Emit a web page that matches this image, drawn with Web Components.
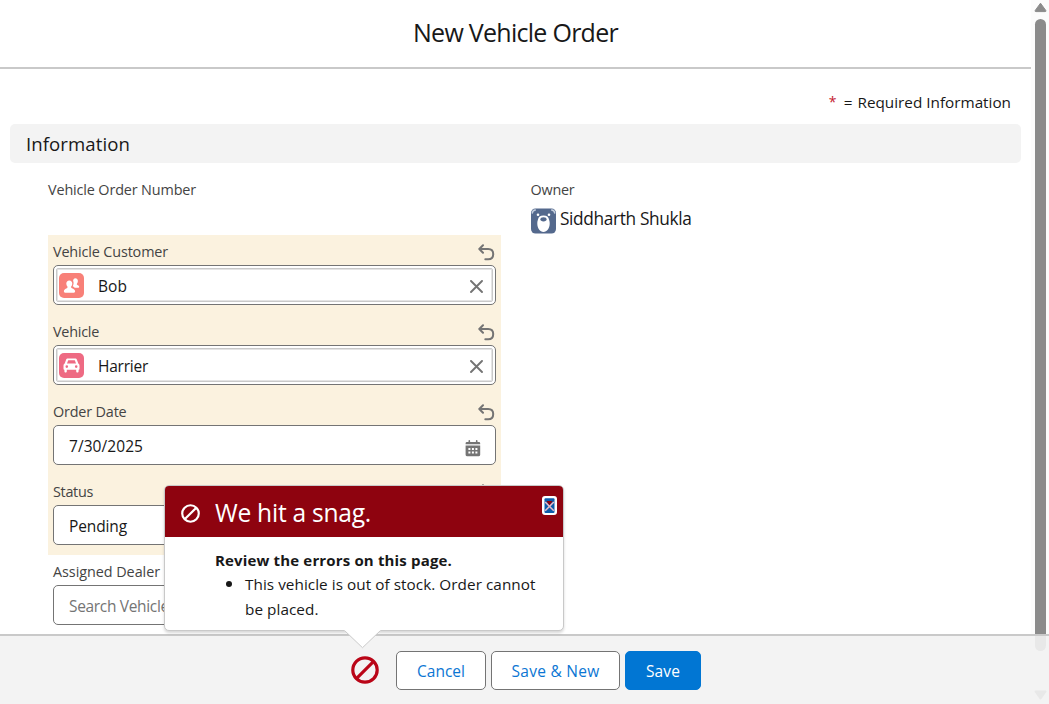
<!DOCTYPE html>
<html lang="en">
<head>
<meta charset="utf-8">
<title>New Vehicle Order</title>
<style>
  html, body { margin: 0; height: 100%; overflow: hidden; background: #fff; }
  body { font: 15.500px/20px "Open Sans", "Noto Sans", sans-serif; color: #181818; }
</style>
</head>
<body>
<order-page></order-page>
<script>
const define = (name, html, setup) => {
  const template = document.createElement('template');
  template.innerHTML = html.trim();
  customElements.define(name, class extends HTMLElement {
    connectedCallback() {
      if (this.shadowRoot) return;
      this.attachShadow({ mode: 'open' }).append(template.content.cloneNode(true));
      if (setup) setup(this, this.shadowRoot);
    }
  });
};

/* One line of text, tracked so that it fills the width in its "w" attribute. */
define('text-run', `
<style>:host { display: inline-block; white-space: nowrap; vertical-align: top; }</style><slot></slot>`,
(el) => {
  const target = parseFloat(el.getAttribute('w'));
  if (!target) return;
  const natural = el.getBoundingClientRect().width;
  el.style.letterSpacing = ((target - natural) / el.textContent.length) + 'px';
});

define('page-header', `
<style>
  :host { display: flex; justify-content: center; box-sizing: border-box; height: 69px; padding-top: 12px;
    border-bottom: 2px solid #c9c9c9; font-size: 25px; line-height: 40px; }
</style><slot></slot>`);

define('required-note', `
<style>
  :host { display: flex; justify-content: flex-end; gap: 5px; padding: 23px 10px 0 0; height: 32px; font-size: 15.300px; line-height: 20px; }
  b { font-weight: 400; color: #c4202e; width: 10px; font-size: 14px; }
</style><b>*</b><slot></slot>`);

define('section-title', `
<style>
  :host { display: block; height: 39px; box-sizing: border-box; padding: 1px 16px 0; border-radius: 5px;
    background: #f3f3f3; font-size: 18.6px; line-height: 38px; }
</style><slot></slot>`);

define('undo-icon', `
<style>:host { display: block; width: 17px; height: 17px; } svg { display: block; }</style>
<svg width="17" height="17" viewBox="0 0 17 17" fill="none" stroke="#747474" stroke-width="2" stroke-linecap="round" stroke-linejoin="round">
  <path d="M5 1.2 1.3 5 5 8.8M1.6 5h8.6c3.2 0 5 2.1 5 5 0 3.200-2 5.300-5 5.300H7.300"/></svg>`);

define('form-field', `
<style>
  :host { display: block; height: 80px; box-sizing: border-box; padding: 7px 5px 0; }
  .label { display: flex; justify-content: space-between; height: 23px; font-size: 14.4px; line-height: 20px; color: #444; }
  .label undo-icon { margin: 1.500px 1.500px 0 0; }
  .box { display: flex; align-items: center; box-sizing: border-box; height: 40px; border: 1px solid #747474;
    border-radius: 5px; background: #fff; padding: 0 15px; }
  .box ::slotted(text-run) { flex: none; margin-top: 2px; }
  :host([lookup]) .box { padding: 2px; }
</style>
<div class="label"><slot name="label"></slot><undo-icon></undo-icon></div>
<div class="box"><slot></slot></div>`,
(el, root) => { if (el.hasAttribute('plain')) root.querySelector('undo-icon').remove(); });

define('lookup-pill', `
<style>
  :host { display: flex; flex: 1; align-items: center; box-sizing: border-box; height: 34px;
    border: 1px solid #c9c9c9; box-shadow: inset 0 0 0 1px #e4e4e4; border-radius: 2px; padding: 0 9px 0 2px; }
  .text { flex: 1; padding: 2px 0 0 14px; line-height: 24px; }
  .x { margin-top: 2px; }
</style>
<slot name="icon"></slot><div class="text"><slot></slot></div>
<svg class="x" width="13" height="13" viewBox="0 0 13 13" stroke="#747474" stroke-width="1.900" stroke-linecap="round"><path d="M1 1l11 11M12 1 1 12"/></svg>`);

define('people-icon', `
<style>:host { display: block; width: 25px; height: 25px; }</style>
<svg width="25" height="25" viewBox="0 0 25 25" style="display:block"><rect width="25" height="25" rx="5" fill="#f88078"/>
<g fill="#fff"><path d="M16.200 5.200c1.700 0 2.700 1.200 2.700 2.900 0 1.100-.4 2-1 2.700-.3.600 0 1 .6 1.300 1.100.5 1.700 1 1.700 2 0 .4-.3.600-.7.600h-3.800c-.8-.8-1.400-1.100-2-1.500 1-1.500 1.200-3.800.4-5.500.2-1.600.9-2.500 2.100-2.500z"/>
<path d="M10.300 7.400c1.900 0 3 1.400 3 3.200 0 1.200-.4 2.200-1.100 3-.4.7 0 1.300.7 1.600 1.700.7 3.200 1.500 3.200 3.100 0 .9-.4 1.400-1.200 1.400H6.100c-.8 0-1.200-.5-1.200-1.400 0-1.600 1.300-2.400 2.900-3.100.7-.3 1-.9.600-1.600-.7-.8-1.100-1.800-1.100-3 0-1.800 1.100-3.200 3-3.200z"/></g></svg>`);

define('car-icon', `
<style>:host { display: block; width: 25px; height: 25px; }</style>
<svg width="25" height="25" viewBox="0 0 25 25" style="display:block"><rect width="25" height="25" rx="5" fill="#ee6a83"/>
<path fill="#fff" fill-rule="evenodd" d="M9 5.500h7c1 0 1.700.5 2 1.400l1.300 3.700c.8.400 1.200 1.100 1.200 2v3.200c0 .6-.4 1-.9 1v1.400c0 .8-.5 1.300-1.200 1.300s-1.200-.5-1.200-1.300v-1.400H7.800v1.400c0 .8-.5 1.300-1.200 1.300s-1.200-.5-1.200-1.300v-1.400c-.5 0-.9-.4-.9-1v-3.200c0-.9.400-1.600 1.200-2L7 6.900c.3-.9 1-1.400 2-1.400zM9.200 7.200 8 10.400h9l-1.200-3.200zM7.800 12.300a1.300 1.300 0 1 0 0 2.600 1.300 1.300 0 0 0 0-2.600zm9.400 0a1.300 1.300 0 1 0 0 2.600 1.300 1.300 0 0 0 0-2.600z"/></svg>`);

define('calendar-icon', `
<style>:host { display: block; width: 16px; height: 17px; margin: 7px -1px 0 auto; }</style>
<svg width="16" height="17" viewBox="0 0 16 17" style="display:block" fill="#747474"><path d="M2 2h1.500V.8q0-.8.800-.8t.8.800V2h5.800V.8q0-.8.800-.8t.8.800V2H14q1.200 0 1.200 1.200V4.200H.6V3.200Q.6 2 2 2z"/>
<path fill-rule="evenodd" d="M.6 5.500h14.600v9.300q0 1.400-1.300 1.400H1.900Q.6 16.200.6 14.800zM3.400 7.900v2h2v-2zm3.500 0v2h2v-2zm3.500 0v2h2v-2zM3.400 11.400v2h2v-2zm3.500 0v2h2v-2zm3.500 0v2h2v-2z"/></svg>`);

define('owner-field', `
<style>
  :host { display: block; padding-left: 11px; }
  .label { font-size: 14.4px; line-height: 20px; color: #444; height: 27px; margin-left: -.5px; }
  .who { display: flex; gap: 4px; font-size: 17.300px; line-height: 24px; }
  svg { margin-top: .5px; }
</style>
<div class="label"><text-run w="44">Owner</text-run></div>
<div class="who"><svg width="25" height="26" viewBox="0 0 25 26"><rect y=".5" width="25" height="25" rx="4.500" fill="#54698d"/>
<g fill="none" stroke="#c5cfdf" stroke-width="1.500" stroke-linecap="round"><path d="M1.300 5Q1.700 2.300 4.300 2M23.700 5Q23.300 2.300 20.700 2"/></g>
<g fill="#fff"><circle cx="7" cy="6.700" r="1.300"/><circle cx="18" cy="6.700" r="1.300"/><path d="M12.500 7.500c3.400 0 5 1.400 5.500 4 .4 1.300.7 2.200.7 4.100 0 4.600-2.600 8.400-6.200 8.400s-6.200-3.800-6.200-8.400c0-1.900.3-2.800.7-4.100.5-2.600 2.100-4 5.500-4z"/></g>
<ellipse cx="12.500" cy="11.300" rx="3.100" ry="2.100" fill="#54698d"/></svg><text-run w="131.5">Siddharth Shukla</text-run></div>`);

define('scroll-bar', `
<style>
  :host { position: relative; display: block; background: #fcfcfc; }
  svg { position: absolute; left: 0; top: 0; }
</style>
<svg width="18" height="634"><path d="M9.500 3.200 14.800 10.500Q15.300 11.600 14 11.600H5Q3.700 11.600 4.200 10.500z" fill="#8b8b8b" stroke="#8b8b8b" stroke-linejoin="round"/>
<path d="M4 634V24.500a5.500 5.500 0 0 1 11 0V634z" fill="#8b8b8b"/></svg>`);

define('ban-icon', `
<style>:host { display: block; } svg { display: block; width: 100%; height: 100%; }</style>
<svg viewBox="0 0 28 28" fill="none" stroke="currentColor" stroke-width="3.200"><circle cx="14" cy="14" r="12.200"/><path d="M22.600 5.400 5.400 22.600"/></svg>`);

define('action-button', `
<style>
  :host { display: flex; align-items: center; justify-content: center; box-sizing: border-box; height: 39px;
    border: 1px solid #747474; border-radius: 5px; background: #fff; color: #0b76d3; font-size: 15.500px; padding-top: 1px; }
  :host([brand]) { background: #0176d3; border-color: #0176d3; color: #fff; }
</style><slot></slot>`);

define('error-popover', `
<style>
  :host { display: block; box-sizing: border-box; width: 400px; height: 146px; border: 1px solid #c9c9c9; border-radius: 5px;
    background: #fff; box-shadow: 0 2px 3px rgba(0,0,0,.16); }
  header { display: flex; height: 51px; background: #8e030f; color: #fff; border-radius: 4px 4px 0 0; font-size: 24.600px; line-height: 54px; }
  header ban-icon { width: 19px; height: 19px; margin: 18px 15.500px 0; flex: none; }
  .close { margin: 10px 6px 0 auto; }
  .body { padding: 11px 0 0 50px; line-height: 25px; font-size: 15.300px; }
  .strong { font-weight: 700; height: 24px; font-size: 15px; line-height: 24px; }
  ul { margin: 0; padding: 0 0 0 30px; list-style: none; }
  li { position: relative; }
  li::before { content: ""; position: absolute; left: -19px; top: 9px; width: 6px; height: 6px; border-radius: 50%; background: #181818; }
  .nub { position: absolute; left: 179px; top: 144px; }
</style>
<header><ban-icon></ban-icon><text-run w="156">We hit a snag.</text-run>
<svg class="close" width="15" height="19" viewBox="0 0 15 19"><rect width="15" height="19" rx="3" fill="#fff"/><rect x="2.500" y="2.300" width="10" height="14.700" rx="1" fill="#0b5cab"/>
<path d="M4.500 5h6L7.500 9.500z" fill="#8e030f"/><path d="m3.200 6 8.600 8.800m0-8.800-8.600 8.800" stroke="#e9bccb" stroke-width="1.500"/><path d="M5 5.200h5L7.500 8.600z" fill="#8e030f"/></svg></header>
<div class="body"><div class="strong"><text-run w="237">Review the errors on this page.</text-run></div>
<ul><li><text-run w="290.5">This vehicle is out of stock. Order cannot</text-run><br><text-run w="73.5">be placed.</text-run></li></ul></div>
<svg class="nub" width="38" height="19"><path d="M0 0 18.500 18 37 0z" fill="#fff"/><path d="M.5.500 18.500 17.700 36.500.5" fill="none" stroke="#c9c9c9"/></svg>`);

define('action-footer', `
<style>
  :host { position: relative; display: flex; gap: 5px; box-sizing: border-box; height: 70px; padding: 15px 0 0 351px;
    border-top: 2px solid #c9c9c9; background: #f3f3f3; }
  ban-icon { width: 28px; height: 28px; margin: 5px 12px 0 0; color: #ba0517; }
  error-popover { position: absolute; left: 164px; top: -151px; }
  .track { position: absolute; right: 0; top: 0; }
</style>
<svg class="track" width="18" height="68"><path d="M4 0v9.500a5.500 5.500 0 0 0 11 0V0z" fill="#e8e8e8"/><path d="M4.500 55.500h10L9.500 62.500z" fill="#e8e8e8" stroke="#e8e8e8" stroke-width="2" stroke-linejoin="round"/></svg>
<ban-icon></ban-icon>
<action-button style="width:90px"><text-run w="48">Cancel</text-run></action-button>
<action-button style="width:129px"><text-run w="88">Save &amp; New</text-run></action-button>
<action-button brand style="width:76px"><text-run w="34">Save</text-run></action-button>
<error-popover></error-popover>`);

define('order-page', `
<style>
  :host { display: grid; grid-template-rows: 634px 70px; height: 704px; }
  .view { display: grid; grid-template-columns: 1fr 18px; min-height: 0; overflow: hidden; }
  .content { padding: 0 10px; }
  .cols { display: grid; grid-template-columns: 453px 1fr; column-gap: 19px; padding: 17px 0 0 38px; }
  .number { height: 55px; font-size: 14.400px; line-height: 20px; color: #444; }
  .edited { background: #fbf2df; }
  .hint { color: #747474; }
</style>
<div class="view">
  <div><page-header><text-run w="205">New Vehicle Order</text-run></page-header>
    <div class="content">
      <required-note><text-run>=</text-run><text-run w="153.5">Required Information</text-run></required-note>
      <section-title><text-run w="104">Information</text-run></section-title>
      <div class="cols">
        <div>
          <div class="number"><text-run w="148">Vehicle Order Number</text-run></div>
          <div class="edited">
            <form-field lookup><text-run slot="label" w="115">Vehicle Customer</text-run><lookup-pill><people-icon slot="icon"></people-icon><text-run w="29">Bob</text-run></lookup-pill></form-field>
            <form-field lookup><text-run slot="label" w="46">Vehicle</text-run><lookup-pill><car-icon slot="icon"></car-icon><text-run w="50">Harrier</text-run></lookup-pill></form-field>
            <form-field><text-run slot="label" w="73.5">Order Date</text-run><text-run w="74">7/30/2025</text-run><calendar-icon></calendar-icon></form-field>
            <form-field><text-run slot="label" w="40">Status</text-run><text-run w="58">Pending</text-run></form-field>
          </div>
          <form-field plain><text-run slot="label" w="107">Assigned Dealer</text-run><text-run class="hint" w="107">Search Vehicles</text-run></form-field>
        </div>
        <owner-field></owner-field>
      </div>
    </div>
  </div>
  <scroll-bar></scroll-bar>
</div>
<action-footer></action-footer>`);
</script>
</body>
</html>
